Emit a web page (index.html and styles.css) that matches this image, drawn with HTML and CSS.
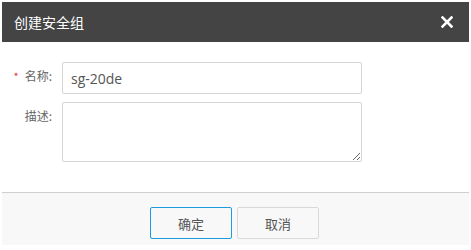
FILE: index.html
```html
<!DOCTYPE html>
<html lang="zh-CN">
<head>
  <meta charset="UTF-8">
  <title>创建安全组</title>
  <link rel="stylesheet" href="styles.css">
</head>
<body>
  <div class="dialog">
    <div class="dialog-header">
      <span class="dialog-title">创建安全组</span>
      <span class="dialog-close">
        <svg width="12" height="12" viewBox="0 0 12 12"><path d="M1.5 1.5L10.5 10.5M10.5 1.5L1.5 10.5" stroke="#fff" stroke-width="2.6" stroke-linecap="square"/></svg>
      </span>
    </div>
    <div class="dialog-body">
      <div class="form-row">
        <label class="form-label"><span class="required">*</span>名称:</label>
        <input class="form-input" type="text" value="sg-20de">
      </div>
      <div class="form-row">
        <label class="form-label">描述:</label>
        <textarea class="form-textarea"></textarea>
      </div>
    </div>
    <div class="dialog-footer">
      <button class="btn btn-primary">确定</button>
      <button class="btn">取消</button>
    </div>
  </div>
</body>
</html>
```

FILE: styles.css
```css
body {
  margin: 0;
  padding: 2px;
  background-color: #fff;
  font-family: "Open Sans", "Noto Sans CJK SC", sans-serif;
  color: #555;
}
.dialog {
  width: 467px;
  background-color: #fff;
}
.dialog-header {
  height: 40px;
  background-color: #444;
  display: flex;
  align-items: center;
  justify-content: space-between;
  padding: 0 16px 0 12px;
}
.dialog-title {
  color: #fff;
  font-size: 14px;
  font-family: "Noto Sans CJK SC", sans-serif;
}
.dialog-close {
  display: flex;
}
.dialog-body {
  padding: 20px 0 30px;
  display: flex;
  flex-direction: column;
  gap: 8px;
}
.form-row {
  display: flex;
  align-items: flex-start;
}
.form-label {
  width: 50px;
  padding-right: 10px;
  text-align: right;
  font-size: 12px;
  color: #666;
  line-height: 16px;
  padding-top: 6px;
  font-family: "Noto Sans CJK SC", sans-serif;
}
.required {
  color: #e4393c;
  margin-right: 6px;
  font-size: 11px;
}
.form-input,
.form-textarea {
  box-sizing: border-box;
  width: 300px;
  border: 1px solid #d6d6d6;
  border-radius: 2px;
  padding: 0 8px;
  font-family: "Open Sans", sans-serif;
  font-size: 14px;
  color: #555;
  outline: none;
  margin: 0;
}
.form-input {
  height: 32px;
}
.form-textarea {
  height: 60px;
  resize: vertical;
}
.dialog-footer {
  border-top: 1px solid #cfcfcf;
  background-color: #f8f8f8;
  height: 53px;
  display: flex;
  justify-content: center;
  align-items: flex-start;
  gap: 5px;
  padding-top: 14px;
  box-sizing: border-box;
  padding-right: 2px;
}
.btn {
  width: 82px;
  height: 32px;
  border: 1px solid #d9d9d9;
  border-radius: 2px;
  background-color: #f8f8f8;
  font-family: "Noto Sans CJK SC", sans-serif;
  font-size: 13px;
  color: #555;
  padding: 0;
}
.btn-primary {
  border-color: #1a9ddb;
}
```
